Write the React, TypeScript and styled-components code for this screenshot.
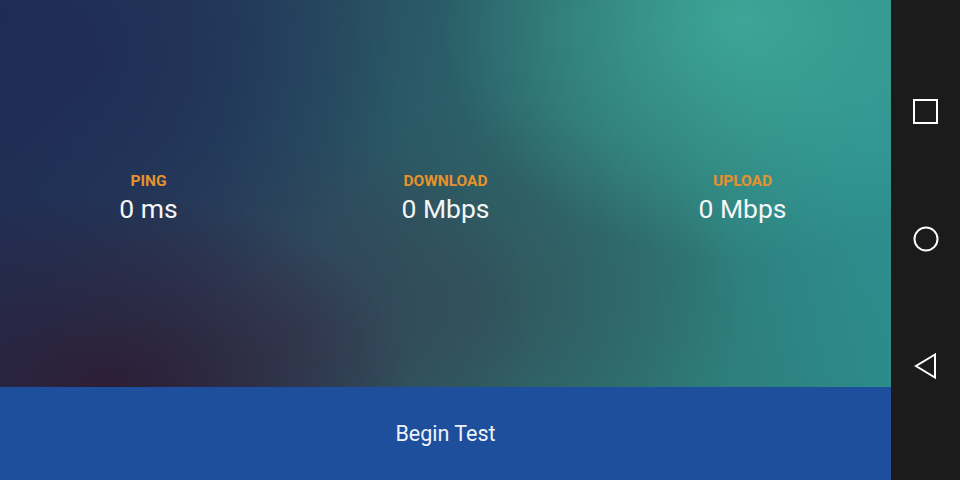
import React from "react";
import styled, { createGlobalStyle } from "styled-components";

const GlobalStyle = createGlobalStyle`
  html, body {
    margin: 0;
    padding: 0;
    background: #1b1b1b;
  }
  body {
    font-family: Roboto, "Noto Sans", "Liberation Sans", sans-serif;
  }
`;

interface IStat {
  label: string;
  value: string;
}

const stats: IStat[] = [
  { label: "PING", value: "0 ms" },
  { label: "DOWNLOAD", value: "0 Mbps" },
  { label: "UPLOAD", value: "0 Mbps" },
];

const StatItem = ({ label, value }: IStat) => {
  return (
    <StatS>
      <div className="label">{label}</div>
      <div className="value">{value}</div>
    </StatS>
  );
};

const App = () => {
  return (
    <Screen>
      <GlobalStyle />
      <Main>
        <Backdrop>
          <StatsRow>
            {stats.map((s) => (
              <StatItem key={s.label} label={s.label} value={s.value} />
            ))}
          </StatsRow>
        </Backdrop>
        <BeginButton>Begin Test</BeginButton>
      </Main>
      <NavBar>
        <NavKey>
          <svg width="28" height="28" viewBox="0 0 28 28">
            <rect x="2" y="2" width="23" height="23" fill="none" stroke="#fff" strokeWidth="2" />
          </svg>
        </NavKey>
        <NavKey>
          <svg width="28" height="28" viewBox="0 0 28 28">
            <circle cx="14" cy="14" r="11.5" fill="none" stroke="#fff" strokeWidth="2" />
          </svg>
        </NavKey>
        <NavKey>
          <svg width="28" height="28" viewBox="0 0 28 28">
            <path d="M23 2.5 L4 14 L23 25.5 Z" fill="none" stroke="#fff" strokeWidth="2" strokeLinejoin="miter" />
          </svg>
        </NavKey>
      </NavBar>
    </Screen>
  );
};

export default App;

const Screen = styled.div`
  display: flex;
  width: 960px;
  height: 480px;
  overflow: hidden;
`;

const Main = styled.div`
  flex: 0 0 891px;
  display: flex;
  flex-direction: column;
`;

const Backdrop = styled.div`
  flex: 0 0 387px;
  display: flex;
  align-items: flex-start;
  background:
    radial-gradient(ellipse 300px 240px at 740px 20px, rgba(64, 176, 158, 0.8), rgba(64, 176, 158, 0) 100%),
    radial-gradient(ellipse 220px 300px at 900px 140px, rgba(46, 150, 150, 0.6), rgba(46, 150, 150, 0) 100%),
    radial-gradient(ellipse 300px 200px at 110px 390px, rgba(46, 26, 50, 0.9), rgba(46, 26, 50, 0) 100%),
    radial-gradient(ellipse 240px 200px at 300px 330px, rgba(58, 50, 78, 0.5), rgba(58, 50, 78, 0) 100%),
    radial-gradient(ellipse 320px 260px at 80px 60px, rgba(30, 42, 86, 0.7), rgba(30, 42, 86, 0) 100%),
    radial-gradient(ellipse 260px 200px at 480px 300px, rgba(52, 74, 84, 0.6), rgba(52, 74, 84, 0) 100%),
    linear-gradient(100deg, #212d52 0%, #25405c 25%, #2a5a66 45%, #2d6c6e 62%, #2e7c7a 80%, #2c8a88 100%);
`;

const StatsRow = styled.div`
  display: grid;
  grid-template-columns: repeat(3, 1fr);
  width: 100%;
  padding-top: 172px;
`;

const StatS = styled.div`
  display: flex;
  flex-direction: column;
  align-items: center;
  .label {
    font-size: 15.5px;
    font-weight: 700;
    color: #e8922a;
    line-height: 19px;
  }
  .value {
    margin-top: 3px;
    font-size: 26.5px;
    color: #f4f6f6;
    line-height: 30px;
  }
`;

const BeginButton = styled.div`
  flex: 1;
  display: flex;
  align-items: center;
  justify-content: center;
  background: #1d4f9c;
  color: #eef2f8;
  font-size: 21.5px;
`;

const NavBar = styled.div`
  flex: 1;
  display: flex;
  flex-direction: column;
  align-items: center;
  justify-content: space-between;
  padding: 98px 0 100px;
  background: #1b1b1b;
`;

const NavKey = styled.div`
  width: 28px;
  height: 28px;
  display: flex;
  align-items: center;
  justify-content: center;
`;
